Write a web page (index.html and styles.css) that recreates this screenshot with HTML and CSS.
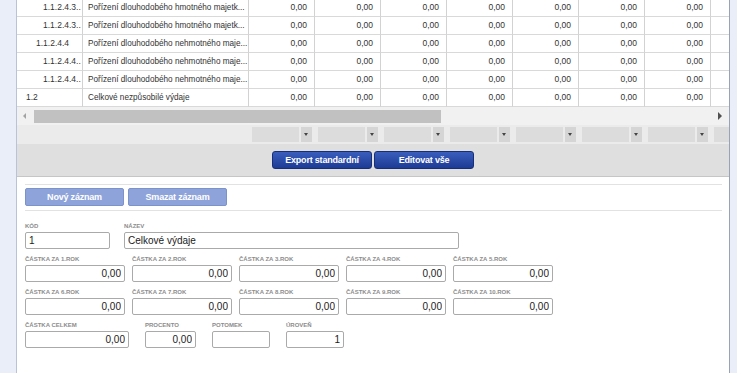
FILE: index.html
```html
<!DOCTYPE html>
<html lang="cs">
<head>
    <meta charset="UTF-8">
    <meta name="viewport" content="width=device-width, initial-scale=1.0">
    <title>Rozpočet</title>
    <link rel="stylesheet" href="styles.css">
</head>
<body>

<div class="page">
    <div class="side"></div>

    <div class="main">
        <div class="grid">
            <div class="row">
                <div class="cell code lvl5">1.1.2.4.3..</div>
                <div class="cell name">Pořízení dlouhodobého hmotného majetk...</div>
                <div class="cell num">0,00</div><div class="cell num">0,00</div><div class="cell num">0,00</div><div class="cell num">0,00</div>
                <div class="cell num">0,00</div><div class="cell num">0,00</div><div class="cell num">0,00</div><div class="cell num"></div>
            </div>
            <div class="row">
                <div class="cell code lvl5">1.1.2.4.3..</div>
                <div class="cell name">Pořízení dlouhodobého hmotného majetk...</div>
                <div class="cell num">0,00</div><div class="cell num">0,00</div><div class="cell num">0,00</div><div class="cell num">0,00</div>
                <div class="cell num">0,00</div><div class="cell num">0,00</div><div class="cell num">0,00</div><div class="cell num"></div>
            </div>
            <div class="row">
                <div class="cell code lvl4">1.1.2.4.4</div>
                <div class="cell name">Pořízení dlouhodobého nehmotného maje...</div>
                <div class="cell num">0,00</div><div class="cell num">0,00</div><div class="cell num">0,00</div><div class="cell num">0,00</div>
                <div class="cell num">0,00</div><div class="cell num">0,00</div><div class="cell num">0,00</div><div class="cell num"></div>
            </div>
            <div class="row">
                <div class="cell code lvl5">1.1.2.4.4..</div>
                <div class="cell name">Pořízení dlouhodobého nehmotného maje...</div>
                <div class="cell num">0,00</div><div class="cell num">0,00</div><div class="cell num">0,00</div><div class="cell num">0,00</div>
                <div class="cell num">0,00</div><div class="cell num">0,00</div><div class="cell num">0,00</div><div class="cell num"></div>
            </div>
            <div class="row">
                <div class="cell code lvl5">1.1.2.4.4..</div>
                <div class="cell name">Pořízení dlouhodobého nehmotného maje...</div>
                <div class="cell num">0,00</div><div class="cell num">0,00</div><div class="cell num">0,00</div><div class="cell num">0,00</div>
                <div class="cell num">0,00</div><div class="cell num">0,00</div><div class="cell num">0,00</div><div class="cell num"></div>
            </div>
            <div class="row">
                <div class="cell code lvl1">1.2</div>
                <div class="cell name">Celkové nezpůsobilé výdaje</div>
                <div class="cell num">0,00</div><div class="cell num">0,00</div><div class="cell num">0,00</div><div class="cell num">0,00</div>
                <div class="cell num">0,00</div><div class="cell num">0,00</div><div class="cell num">0,00</div><div class="cell num"></div>
            </div>
        </div>

        <div class="hscroll">
            <span class="arrow-left"></span>
            <div class="track"><div class="thumb"></div></div>
            <span class="arrow-right"></span>
        </div>

        <div class="filters">
            <div class="filter-gap"></div>
            <div class="filter"><span class="fbox"></span><span class="fdrop"></span></div>
            <div class="filter"><span class="fbox"></span><span class="fdrop"></span></div>
            <div class="filter"><span class="fbox"></span><span class="fdrop"></span></div>
            <div class="filter"><span class="fbox"></span><span class="fdrop"></span></div>
            <div class="filter"><span class="fbox"></span><span class="fdrop"></span></div>
            <div class="filter"><span class="fbox"></span><span class="fdrop"></span></div>
            <div class="filter"><span class="fbox"></span><span class="fdrop"></span></div>
            <div class="filter"><span class="fbox"></span><span class="fdrop"></span></div>
        </div>

        <div class="toolbar">
            <button class="btn-dark">Export standardní</button>
            <button class="btn-dark">Editovat vše</button>
        </div>

        <div class="detail">
            <div class="rule"></div>
            <div class="actions">
                <button class="btn-light">Nový záznam</button>
                <button class="btn-light">Smazat záznam</button>
            </div>
            <div class="rule"></div>

            <form class="record">
                <div class="frow">
                    <div class="field w-kod"><label>Kód</label><input type="text" value="1"></div>
                    <div class="field w-nazev"><label>Název</label><input type="text" value="Celkové výdaje"></div>
                </div>
                <div class="frow years">
                    <div class="field w-rok"><label>Částka za 1.rok</label><input class="right" type="text" value="0,00"></div>
                    <div class="field w-rok"><label>Částka za 2.rok</label><input class="right" type="text" value="0,00"></div>
                    <div class="field w-rok"><label>Částka za 3.rok</label><input class="right" type="text" value="0,00"></div>
                    <div class="field w-rok"><label>Částka za 4.rok</label><input class="right" type="text" value="0,00"></div>
                    <div class="field w-rok"><label>Částka za 5.rok</label><input class="right" type="text" value="0,00"></div>
                </div>
                <div class="frow years">
                    <div class="field w-rok"><label>Částka za 6.rok</label><input class="right" type="text" value="0,00"></div>
                    <div class="field w-rok"><label>Částka za 7.rok</label><input class="right" type="text" value="0,00"></div>
                    <div class="field w-rok"><label>Částka za 8.rok</label><input class="right" type="text" value="0,00"></div>
                    <div class="field w-rok"><label>Částka za 9.rok</label><input class="right" type="text" value="0,00"></div>
                    <div class="field w-rok"><label>Částka za 10.rok</label><input class="right" type="text" value="0,00"></div>
                </div>
                <div class="frow totals">
                    <div class="field w-celkem"><label>Částka celkem</label><input class="right" type="text" value="0,00"></div>
                    <div class="field w-proc"><label>Procento</label><input class="right" type="text" value="0,00"></div>
                    <div class="field w-small"><label>Potomek</label><input type="text" value=""></div>
                    <div class="field w-small"><label>Úroveň</label><input class="right" type="text" value="1"></div>
                </div>
            </form>
        </div>
    </div>

    <div class="side-r"></div>
</div>

</body>
</html>
```

FILE: styles.css
```css
body {
    font-family: "Liberation Sans", Arial, sans-serif;
    margin: 0;
    padding: 0;
    color: #333;
    background-color: #fff;
}

.page {
    display: flex;
    height: 373px;
    overflow: hidden;
}

.side {
    width: 16px;
    flex: none;
    background-color: #e9eef9;
    border-right: 1px solid #b9c2d6;
}

.side-r {
    width: 7px;
    flex: none;
    background-color: #e9eef9;
    border-left: 1px solid #9aa3b5;
}

.main {
    width: 712px;
    flex: none;
    overflow: hidden;
}

/* tabulka */
.grid {
    margin-top: -1px;
    overflow: hidden;
}

.row {
    display: flex;
    height: 18px;
}

.cell {
    flex: none;
    box-sizing: border-box;
    height: 18px;
    line-height: 17px;
    font-size: 8.5px;
    border-right: 1px solid #d2d2d2;
    border-bottom: 1px solid #d9d9d9;
    white-space: nowrap;
    overflow: hidden;
}

.code {
    width: 66px;
}

.lvl1 { padding-left: 9px; }
.lvl4 { padding-left: 19px; }
.lvl5 { padding-left: 26px; }

.name {
    width: 166px;
    padding-left: 5px;
    font-size: 8.2px;
}

.num {
    width: 66px;
    text-align: right;
    padding-right: 7px;
}

/* posuvnik */
.hscroll {
    display: flex;
    align-items: center;
    height: 18px;
    background-color: #f1f1f1;
}

.arrow-left {
    width: 0;
    height: 0;
    margin-left: 6px;
    border-top: 3px solid transparent;
    border-bottom: 3px solid transparent;
    border-right: 3px solid #a3a3a3;
}

.track {
    flex: 1;
    margin-left: 8px;
}

.thumb {
    width: 407px;
    height: 13px;
    background-color: #c1c1c1;
}

.arrow-right {
    width: 0;
    height: 0;
    margin-right: 7px;
    border-top: 4px solid transparent;
    border-bottom: 4px solid transparent;
    border-left: 4px solid #505050;
}

/* filtry */
.filters {
    display: flex;
    height: 19px;
    background-color: #ebebeb;
    overflow: hidden;
}

.filter-gap {
    width: 232px;
    flex: none;
}

.filter {
    width: 66px;
    flex: none;
    display: flex;
    padding: 2px 0 0 3px;
    box-sizing: border-box;
}

.fbox {
    width: 47px;
    height: 15px;
    background-color: #dcdcdc;
}

.fdrop {
    width: 11px;
    height: 15px;
    margin-left: 2px;
    background-color: #d5d5d5;
    position: relative;
}

.fdrop::after {
    content: "";
    position: absolute;
    left: 3px;
    top: 6px;
    border-left: 2.5px solid transparent;
    border-right: 2.5px solid transparent;
    border-top: 3px solid #444;
}

/* lista */
.toolbar {
    background-color: #dfdfdf;
    border-bottom: 1px solid #c6c6c6;
    display: flex;
    justify-content: center;
    gap: 2px;
    padding-top: 7px;
    box-sizing: border-box;
    height: 33px;
}

.btn-dark {
    width: 100px;
    height: 18px;
    padding: 0;
    font-family: "Liberation Sans", Arial, sans-serif;
    font-size: 9px;
    font-weight: bold;
    letter-spacing: -0.2px;
    color: #fff;
    background: linear-gradient(#3a5dbd, #1d3b95);
    border: 1px solid #172f78;
    border-radius: 3px;
    cursor: pointer;
}

/* detail */
.detail {
    padding: 7px 7px 0 8px;
}

.rule {
    height: 1px;
    background-color: #e2e2e2;
}

.actions {
    display: flex;
    gap: 4px;
    margin: 3px 0 4px;
}

.btn-light {
    width: 99px;
    height: 18px;
    padding: 0;
    font-family: "Liberation Sans", Arial, sans-serif;
    font-size: 9px;
    font-weight: bold;
    letter-spacing: -0.2px;
    color: #fff;
    background-color: #8ea3da;
    border: 1px solid #7c92cb;
    border-radius: 2px;
    cursor: pointer;
}

.record {
    padding-top: 9px;
}

.frow {
    display: flex;
    margin-bottom: 4px;
}

.frow:first-child {
    gap: 14px;
}

.years {
    gap: 7px;
}

.totals {
    gap: 16px;
}

.field label {
    display: block;
    height: 12px;
    line-height: 12px;
    font-size: 6px;
    font-weight: bold;
    color: #8c8c8c;
    text-transform: uppercase;
}

.field input {
    display: block;
    width: 100%;
    height: 17px;
    box-sizing: border-box;
    padding: 0 3px;
    font-family: "Liberation Sans", Arial, sans-serif;
    font-size: 10px;
    color: #222;
    border: 1px solid #aaa;
    border-radius: 2px;
}

.field input.right {
    text-align: right;
}

.w-kod { width: 85px; }
.w-nazev { width: 335px; }
.w-rok { width: 100px; }
.w-celkem { width: 104px; }
.w-proc { width: 51px; }
.w-small { width: 58px; }
```
